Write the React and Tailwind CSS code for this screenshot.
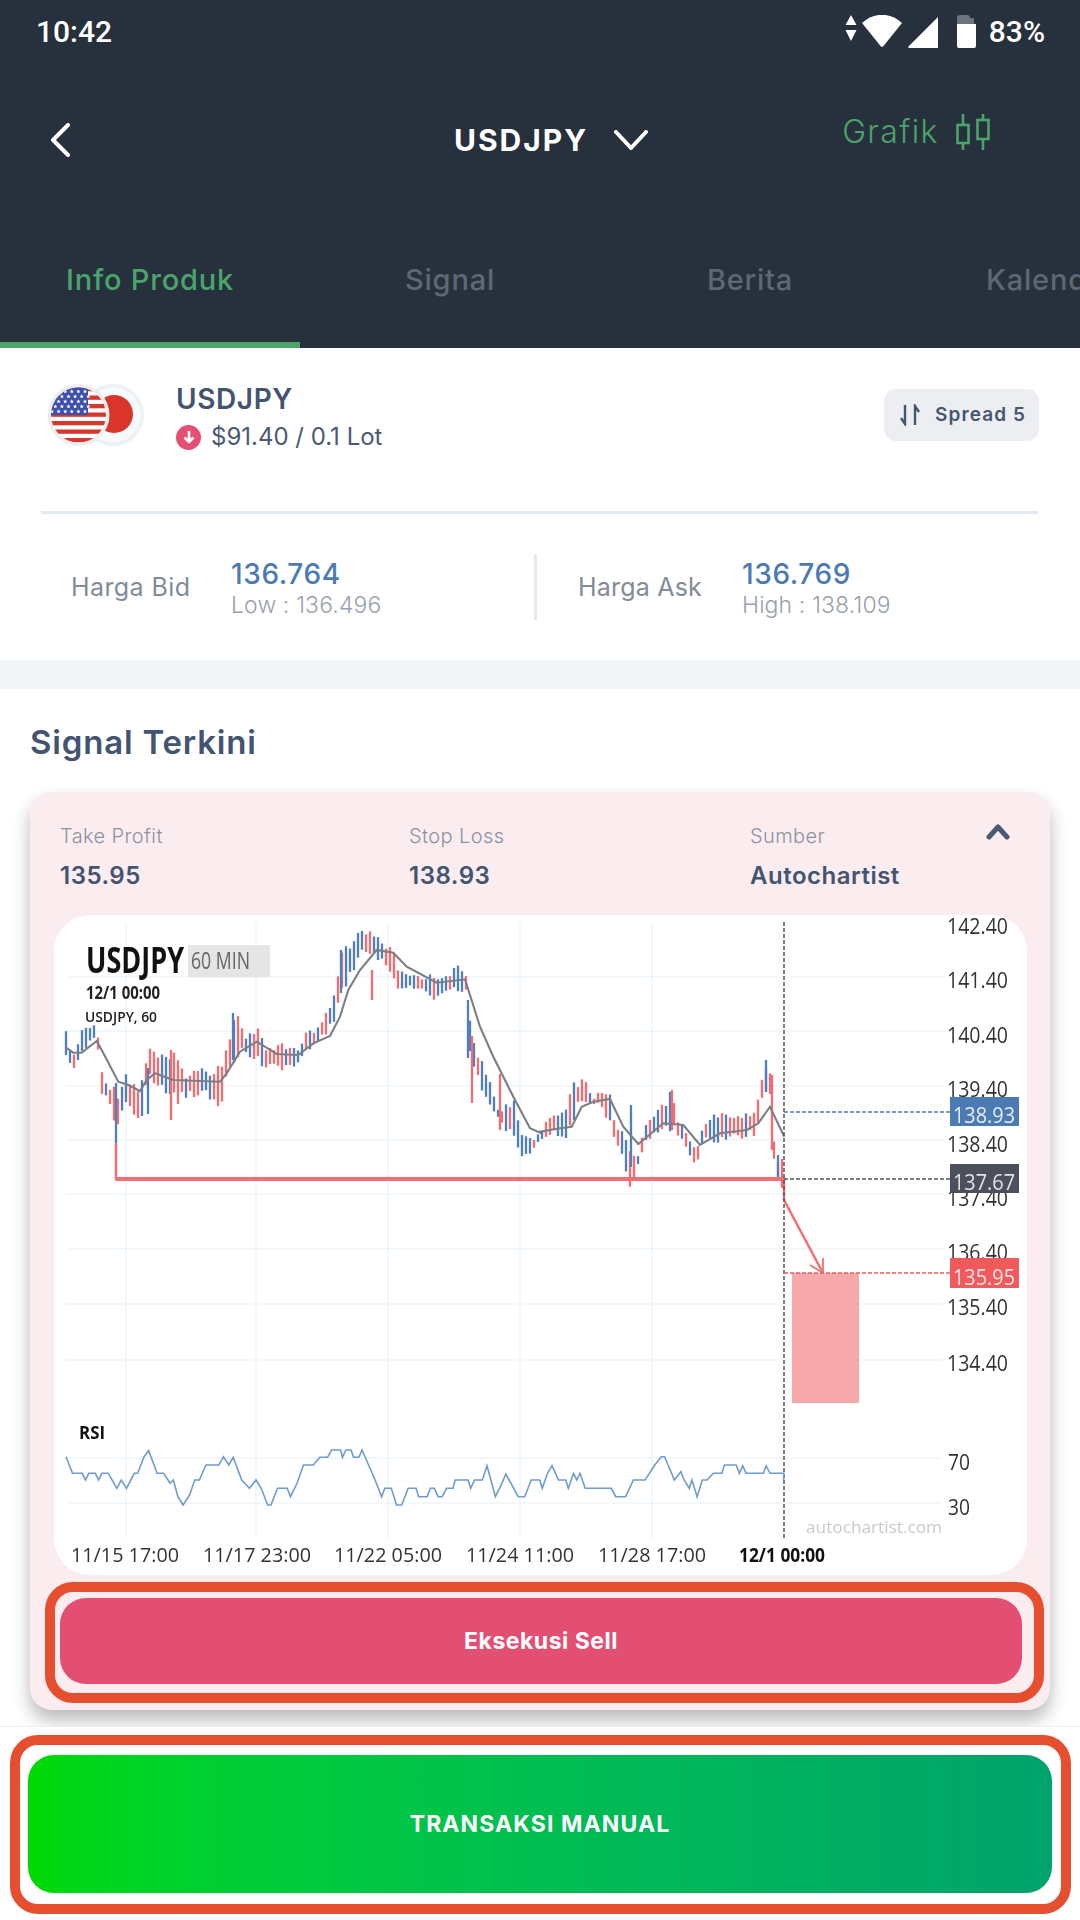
import { useId } from 'react';

// envelope of the candles, read off the chart at 3x (x/3 + offset)
const UP_A = [[77,360],[100,440],[128,345],[160,340],[172,360],[185,470],[215,530],[232,515],[258,478],[300,530],[325,400],[337,385],[355,430],[400,425],[440,480],[505,465],[550,435],[580,310],[600,310],[615,370],[655,350],[680,420],[720,385],[780,420],[795,365],[840,350],[890,230],[900,125],[920,90],[935,100],[960,58],[1010,62],[1020,100],[1055,98],[1075,180],[1110,190],[1190,190],[1255,165],[1275,178],[1285,230],[1297,370],[1310,440],[1330,435],[1345,490],[1375,595],[1420,560],[1440,660],[1480,680]];
const LOW_A = [[77,450],[100,485],[125,430],[170,390],[185,560],[212,600],[232,700],[258,590],[297,635],[310,615],[320,520],[355,545],[410,585],[480,555],[540,610],[560,500],[600,430],[680,485],[765,478],[830,400],[880,360],[900,250],[935,215],[960,130],[1030,160],[1075,240],[1120,240],[1190,280],[1240,255],[1280,250],[1290,445],[1330,565],[1370,620],[1390,655],[1440,745],[1470,740]];
const UP_B = [[0,665],[40,590],[60,625],[100,510],[135,497],[160,560],[205,522],[225,630],[270,690],[295,730],[320,620],[345,590],[395,540],[410,620],[440,650],[470,720],[495,620],[560,600],[620,610],[640,590],[660,520],[677,450],[695,500],[700,680],[715,735],[733,735]];
const LOW_B = [[0,690],[40,670],[70,690],[90,690],[110,600],[180,590],[230,700],[270,835],[285,830],[295,760],[320,700],[400,660],[440,730],[470,780],[490,700],[520,705],[600,690],[650,680],[665,590],[690,560],[695,715],[713,815],[733,870]];
const MA_A = [[77,412],[100,428],[125,428],[170,393],[185,420],[235,515],[265,525],[300,543],[320,510],[345,490],[400,510],[540,515],[560,490],[600,425],[650,395],[710,432],[775,435],[820,400],[870,378],[900,320],[925,240],[960,180],[1010,120],[1060,128],[1100,170],[1190,218],[1275,208],[1320,350],[1360,440],[1420,560],[1470,655],[1500,668]];
const MA_B = [[0,665],[60,655],[95,650],[125,590],[160,575],[210,567],[250,650],[295,702],[370,640],[430,645],[480,705],[540,670],[620,660],[655,640],[690,590],[733,680]];
const RSI = [[40,170],[50,220],[65,220],[70,240],[75,220],[85,220],[90,240],[95,220],[105,220],[118,265],[125,240],[133,265],[145,220],[150,220],[160,170],[167,152],[180,220],[190,220],[200,250],[205,240],[212,290],[220,315],[230,285],[238,240],[245,240],[255,195],[275,195],[282,170],[290,195],[297,172],[310,240],[322,265],[332,240],[340,265],[350,315],[355,315],[365,265],[380,265],[385,290],[395,250],[405,195],[420,195],[430,172],[442,172],[448,150],[462,150],[465,172],[470,150],[478,150],[482,172],[490,172],[495,150],[505,195],[515,240],[525,290],[530,265],[540,265],[548,315],[556,315],[566,265],[578,265],[582,290],[595,290],[600,265],[606,265],[612,290],[618,290],[625,265],[635,265],[638,240],[658,240],[662,265],[668,240],[680,240],[687,197],[700,290],[710,250],[716,222],[724,250],[735,290],[745,290],[755,240],[768,240],[772,265],[780,220],[787,197],[797,240],[808,240],[812,265],[820,220],[825,240],[830,220],[838,265],[878,265],[885,290],[900,290],[912,240],[930,240],[945,195],[955,170],[960,170],[975,240],[985,215],[990,240],[998,265],[1002,240],[1010,290],[1018,240],[1025,240],[1035,220],[1048,220],[1052,195],[1070,195],[1075,220],[1080,197],[1085,220],[1112,220],[1116,197],[1122,220],[1143,220],[1143,240]];
// spikes the envelope would lose: x, top, bottom on the page
const SPIKES = [
  [116, 1083, 1143, '#4f80bd'],
  [148, 1068, 1114, '#4f80bd'],
  [171, 1050, 1120, '#f26d70'],
  [233, 1013, 1060, '#4f80bd'],
  [341, 950, 993, '#4f80bd'],
  [372, 970, 1000, '#f26d70'],
  [468, 1000, 1058, '#4f80bd'],
  [472, 1036, 1103, '#f26d70'],
  [500, 1074, 1130, '#f26d70'],
  [672, 1090, 1130, '#f26d70'],
  [766, 1060, 1092, '#4f80bd'],
  [772, 1075, 1150, '#f26d70'],
  [778, 1155, 1181, '#4f80bd'],
  [631, 1105, 1167, '#4f80bd'],
];

const toPage = (pts, offX) => pts.map(([x, y]) => [offX + x / 3, 910 + y / 3]);
const upper = [...toPage(UP_A, 40), ...toPage(UP_B, 540)];
const lower = [...toPage(LOW_A, 40), ...toPage(LOW_B, 540)];
const maLine = [...toPage(MA_A, 40), ...toPage(MA_B, 540)];
const line = (pts) => pts.map(([x, y]) => `${x.toFixed(1)},${y.toFixed(1)}`).join(' ');

const at = (pts, x) => {
  for (let i = 1; i < pts.length; i++) {
    if (x <= pts[i][0]) {
      const [x0, y0] = pts[i - 1];
      const [x1, y1] = pts[i];
      return y0 + ((y1 - y0) * (x - x0)) / (x1 - x0 || 1);
    }
  }
  return pts[pts.length - 1][1];
};

const noise = (n) => {
  const v = Math.sin(n * 12.9898) * 43758.5453;
  return v - Math.floor(v);
};

const candles = [];
for (let x = 66, i = 0; x <= 784; x += 4, i++) {
  const top = at(upper, x);
  const bot = at(lower, x);
  const range = bot - top;
  candles.push({
    x,
    top: top + noise(i) * range * 0.3,
    bot: bot - noise(i + 500) * range * 0.3,
    color: noise(i + 900) > 0.5 ? '#f26d70' : '#4f80bd',
  });
}

const AXIS = [[142.4, 934], [141.4, 988], [140.4, 1043], [139.4, 1097], [138.4, 1152], [137.4, 1206], [136.4, 1260], [135.4, 1315], [134.4, 1371]];
const GRID_Y = [977, 1031, 1086, 1140, 1194, 1249, 1304, 1360];
const GRID_X = [126, 256, 388, 520, 652];
const TIMES = [['11/15 17:00', 71], ['11/17 23:00', 203], ['11/22 05:00', 334], ['11/24 11:00', 466], ['11/28 17:00', 598]];

function SignalChart() {
  return (
    <svg viewBox="54 915 973 660" className="block h-[660px] w-[973px] blur-[0.4px] font-['Open_Sans',sans-serif]">
      {GRID_Y.map((y) => (
        <line key={y} x1="66" x2="943" y1={y} y2={y} stroke="#eef5fa" strokeWidth="1.5" />
      ))}
      {[1458, 1503].map((y) => (
        <line key={y} x1="66" x2="941" y1={y} y2={y} stroke="#eef5fa" strokeWidth="1.5" />
      ))}
      {GRID_X.map((x) => (
        <line key={x} x1={x} x2={x} y1="923" y2="1538" stroke="#eef5fa" strokeWidth="1.5" />
      ))}

      {candles.map((c) => (
        <line key={c.x} x1={c.x} x2={c.x} y1={c.top} y2={c.bot} stroke={c.color} strokeWidth="2.3" />
      ))}
      {SPIKES.map(([x, t, b, color]) => (
        <line key={`${x}-${t}`} x1={x} x2={x} y1={t} y2={b} stroke={color} strokeWidth="2.3" />
      ))}
      <polyline points={line(maLine)} fill="none" stroke="#7b7f85" strokeWidth="2.1" />

      <polyline points="116,1143 116,1179 784,1179 784,1200 823,1273" fill="none" stroke="#f56f72" strokeWidth="2.5" />
      <line x1="116" x2="784" y1="1179" y2="1179" stroke="#f56f72" strokeWidth="4" />
      <polyline points="810,1265 823,1273 823,1258" fill="none" stroke="#f56f72" strokeWidth="1.8" />
      <rect x="792" y="1273" width="67" height="130" fill="#f6a8aa" />

      <line x1="784" x2="784" y1="922" y2="1538" stroke="#50555f" strokeWidth="1.5" strokeDasharray="4 2" />
      <line x1="784" x2="950" y1="1112" y2="1112" stroke="#4c7ab3" strokeWidth="1.5" strokeDasharray="4 2" />
      <line x1="784" x2="950" y1="1179" y2="1179" stroke="#50555f" strokeWidth="1.5" strokeDasharray="4 2" />
      <line x1="784" x2="950" y1="1273" y2="1273" stroke="#f05a5c" strokeWidth="1.5" strokeDasharray="4 2" />

      {AXIS.map(([v, y]) => (
        <text key={v} x="947" y={y} fontSize="21" fill="#333" textLength="61" lengthAdjust="spacingAndGlyphs">{v.toFixed(2)}</text>
      ))}
      <rect x="950" y="1097" width="69" height="29" fill="#4c7ab3" />
      <text x="953" y="1123" fontSize="21" fill="#e6edf5" textLength="62" lengthAdjust="spacingAndGlyphs">138.93</text>
      <rect x="950" y="1164" width="69" height="29" fill="#4b505c" />
      <text x="953" y="1190" fontSize="21" fill="#e2e3e6" textLength="62" lengthAdjust="spacingAndGlyphs">137.67</text>
      <rect x="950" y="1258" width="69" height="30" fill="#f05a5c" />
      <text x="953" y="1285" fontSize="21" fill="#fde5e5" textLength="62" lengthAdjust="spacingAndGlyphs">135.95</text>

      <text x="86" y="973" fontSize="36" fontWeight="700" fill="#111" textLength="98" lengthAdjust="spacingAndGlyphs">USDJPY</text>
      <rect x="188" y="945" width="82" height="32" fill="#e5e5e5" />
      <text x="191" y="969" fontSize="24" fill="#666" textLength="59" lengthAdjust="spacingAndGlyphs">60 MIN</text>
      <text x="86" y="999" fontSize="17" fontWeight="700" fill="#222" textLength="74" lengthAdjust="spacingAndGlyphs">12/1 00:00</text>
      <text x="85" y="1022" fontSize="15" fontWeight="600" fill="#222" textLength="72" lengthAdjust="spacingAndGlyphs">USDJPY, 60</text>

      <text x="79" y="1439" fontSize="17" fontWeight="700" fill="#111" textLength="26" lengthAdjust="spacingAndGlyphs">RSI</text>
      <polyline
        points={RSI.map(([x, y]) => `${(40 + x / 1.537).toFixed(1)},${(1400 + y / 3).toFixed(1)}`).join(' ')}
        fill="none"
        stroke="#6f9bd0"
        strokeWidth="1.6"
      />
      <text x="948" y="1470" fontSize="21" fill="#333" textLength="22" lengthAdjust="spacingAndGlyphs">70</text>
      <text x="948" y="1515" fontSize="21" fill="#333" textLength="22" lengthAdjust="spacingAndGlyphs">30</text>
      <text x="806" y="1533" fontSize="16" fill="#cacaca" textLength="136" lengthAdjust="spacingAndGlyphs">autochartist.com</text>

      {TIMES.map(([t, x]) => (
        <text key={t} x={x} y="1562" fontSize="20" fill="#333" textLength="108" lengthAdjust="spacingAndGlyphs">{t}</text>
      ))}
      <text x="739" y="1562" fontSize="20" fontWeight="700" fill="#111" textLength="86" lengthAdjust="spacingAndGlyphs">12/1 00:00</text>
    </svg>
  );
}

function Star({ x, y }) {
  const d = Array.from({ length: 10 }, (_, i) => {
    const r = i % 2 ? 1 : 2.3;
    const a = (i * Math.PI) / 5 - Math.PI / 2;
    return `${(x + r * Math.cos(a)).toFixed(2)},${(y + r * Math.sin(a)).toFixed(2)}`;
  }).join(' ');
  return <polygon points={d} fill="#fff" />;
}

function PairFlags() {
  const id = useId();
  const stripes = Array.from({ length: 7 }, (_, i) => 5 + i * 8.5);
  const stars = [];
  for (let r = 0; r < 5; r++) {
    for (let c = 0; c < 6; c++) {
      stars.push({ x: 8 + c * 6.6 + (r % 2 ? 3.3 : 0), y: 9.5 + r * 5 });
    }
  }
  return (
    <svg viewBox="0 0 104 66" className="h-[66px] w-[104px] shrink-0">
      <clipPath id={id}>
        <circle cx="34.5" cy="33" r="27.5" />
      </clipPath>
      <circle cx="69" cy="33" r="31" fill="#eef1f3" />
      <circle cx="69" cy="33" r="27.5" fill="#f6fafd" />
      <circle cx="70" cy="32" r="19" fill="#d9352b" />
      <circle cx="34.5" cy="33" r="31" fill="#eceef0" />
      <g clipPath={`url(#${id})`}>
        <rect x="0" y="0" width="70" height="66" fill="#fff" />
        {stripes.map((y) => (
          <rect key={y} x="0" y={y} width="70" height="4.3" fill="#d5392e" />
        ))}
        <rect x="0" y="0" width="44" height="33" fill="#3c4fad" />
        {stars.map((s) => (
          <Star key={`${s.x}-${s.y}`} x={s.x} y={s.y} />
        ))}
      </g>
    </svg>
  );
}

function StatusIcons() {
  return (
    <svg viewBox="0 0 135 36" className="h-[36px] w-[135px]">
      <path d="M6 0l5.5 10H.5zM.5 15h11L6 26z" fill="#fff" />
      <path d="M17 8C29-3 45-3 57 8L38.5 31a2 2 0 0 1-3 0z" fill="#fff" />
      <path d="M63 32L93 2v30.5a.5.5 0 0 1-.5.5H64z" fill="#fff" />
      <path d="M112 9V3a3 3 0 0 1 3-3h7v0a3 3 0 0 1 3 3h3a1 1 0 0 1 1 1v5z" fill="#6a737e" />
      <path d="M112 9h19v22a2 2 0 0 1-2 2h-15a2 2 0 0 1-2-2z" fill="#fff" />
    </svg>
  );
}

function Label({ children }) {
  return <span className="text-[20px] leading-[26px] font-light tracking-[0.4px] text-[#8b93a0]">{children}</span>;
}

function Value({ children }) {
  return <span className="mt-[13px] text-[24px] leading-[28px] font-semibold tracking-[0.5px] text-[#435470]">{children}</span>;
}

export default function App() {
  return (
    <div className="h-[1920px] w-[1080px] overflow-hidden bg-white font-['Inter',sans-serif]">
      <header className="h-[348px] bg-[#27303d]">
        <div className="flex h-[62px] items-center pl-[36px] font-['Roboto',sans-serif] text-[30px] font-medium text-white">
          <span>10:42</span>
          <div className="ml-auto flex items-center gap-[9px] pr-[35px]">
            <div className="mt-[3px]"><StatusIcons /></div>
            <span>83%</span>
          </div>
        </div>
        <div className="flex h-[156px] items-center">
          <svg viewBox="0 0 20 34" className="ml-[50px] h-[34px] w-[20px]" fill="none" stroke="#fff" strokeWidth="4" strokeLinecap="round" strokeLinejoin="round">
            <path d="M18 2L3 17l15 15" />
          </svg>
          <span className="ml-[384px] text-[30px] font-bold tracking-[2px] text-white">USDJPY</span>
          <svg viewBox="0 0 34 20" className="ml-[26px] h-[20px] w-[34px]" fill="none" stroke="#fff" strokeWidth="4" strokeLinecap="round" strokeLinejoin="round">
            <path d="M2 2l15 16L32 2" />
          </svg>
          <div className="ml-[194px] mt-[-16px] flex items-center gap-[17px] text-[#4aa56a]">
            <span className="text-[32px] font-light tracking-[1.4px]">Grafik</span>
            <svg viewBox="0 0 34 36" className="h-[36px] w-[34px]" fill="none" stroke="#4aa56a" strokeWidth="2.6">
              <path d="M7 0v11M7 29v7M27 0v6M27 25v11" />
              <rect x="1.5" y="11" width="11" height="18" />
              <rect x="21.5" y="6" width="11" height="19" />
            </svg>
          </div>
        </div>
        <div className="flex h-[124px] items-center overflow-hidden text-[29px] font-medium tracking-[0.8px]">
          <span className="w-[300px] shrink-0 text-center text-[#4aa56a]">Info Produk</span>
          <span className="w-[300px] shrink-0 text-center text-[#5f6773]">Signal</span>
          <span className="w-[300px] shrink-0 text-center text-[#5f6773]">Berita</span>
          <span className="w-[300px] shrink-0 pl-[86px] text-[#5f6773]">Kalender</span>
        </div>
        <div className="h-[6px] w-[300px] bg-[#4aa56a]" />
      </header>

      <section className="h-[312px]">
        <div className="flex h-[102px] items-center pl-[44px] pr-[41px] pt-[32px]">
          <PairFlags />
          <div className="ml-[28px] mt-[4px] flex flex-col">
            <span className="text-[28px] leading-[34px] font-semibold tracking-[0.6px] text-[#435470]">USDJPY</span>
            <div className="mt-[6px] flex items-center gap-[10px]">
              <span className="flex size-[25px] items-center justify-center rounded-full bg-[#e54f73]">
                <svg viewBox="0 0 14 14" className="size-[14px]" fill="none" stroke="#fff" strokeWidth="2.6" strokeLinejoin="round">
                  <path d="M7 1v10M2.5 7.5L7 12l4.5-4.5" />
                </svg>
              </span>
              <span className="text-[24px] leading-[30px] text-[#4a5a73]">$91.40 / 0.1 Lot</span>
            </div>
          </div>
          <div className="ml-auto flex h-[52px] w-[155px] items-center rounded-[12px] bg-[#eceef2] pl-[16px] text-[19px] font-semibold tracking-[1.1px] text-[#47566f]">
            <svg viewBox="0 0 20 22" className="h-[22px] w-[20px]" fill="none" stroke="#47566f" strokeWidth="2.4">
              <path d="M5 1v19L1 14M15 21V2l4 6" />
            </svg>
            <span className="ml-[15px]">Spread 5</span>
          </div>
        </div>
        <div className="ml-[41px] mt-[61px] h-[3px] w-[997px] bg-[#e2eaf0]" />
        <div className="flex h-[146px] items-center">
          <span className="ml-[71px] mt-[2px] w-[160px] text-[25px] tracking-[0.4px] text-[#838b98]">Harga Bid</span>
          <div className="mt-[4px] flex w-[303px] flex-col">
            <span className="text-[28px] leading-[32px] font-medium tracking-[0.6px] text-[#4a7ab5]">136.764</span>
            <span className="text-[23px] leading-[30px] font-light tracking-[0.1px] text-[#9aa2ad]">Low : 136.496</span>
          </div>
          <div className="h-[66px] w-[3px] bg-[#e2eaf0]" />
          <span className="ml-[41px] mt-[2px] w-[164px] text-[25px] tracking-[0.2px] text-[#838b98]">Harga Ask</span>
          <div className="mt-[4px] flex flex-col">
            <span className="text-[28px] leading-[32px] font-medium tracking-[0.6px] text-[#4a7ab5]">136.769</span>
            <span className="text-[23px] leading-[30px] font-light tracking-[0.1px] text-[#9aa2ad]">High : 138.109</span>
          </div>
        </div>
      </section>

      <div className="h-[29px] bg-[#f3f6f9]" />

      <section>
        <h2 className="pl-[30px] pt-[33px] text-[33px] leading-[40px] font-semibold tracking-[0.8px] text-[#435470]">Signal Terkini</h2>
        <div className="ml-[30px] mt-[30px] h-[918px] w-[1020px] rounded-[22px] bg-[#fbecef] shadow-[0_10px_18px_rgba(0,0,0,0.28)]">
          <div className="flex h-[123px] pl-[30px] pt-[31px]">
            <div className="flex w-[349px] flex-col"><Label>Take Profit</Label><Value>135.95</Value></div>
            <div className="flex w-[341px] flex-col"><Label>Stop Loss</Label><Value>138.93</Value></div>
            <div className="flex w-[236px] flex-col"><Label>Sumber</Label><Value>Autochartist</Value></div>
            <svg viewBox="0 0 24 16" className="mt-[1px] h-[16px] w-[24px]" fill="none" stroke="#4a5a73" strokeWidth="5" strokeLinecap="round" strokeLinejoin="round">
              <path d="M3 13l9-10 9 10" />
            </svg>
          </div>
          <div className="ml-[24px] h-[660px] w-[973px] overflow-hidden rounded-[36px] bg-white">
            <SignalChart />
          </div>
          <div className="ml-[15px] mt-[7px] h-[121px] w-[999px] rounded-[28px] border-[10px] border-[#e64e30] pb-[9px] pl-[5px] pr-[12px] pt-[6px]">
            <button className="flex h-[86px] w-full items-center justify-center rounded-[26px] bg-[#e34f73] text-[23px] font-bold tracking-[0.5px] text-white">
              Eksekusi Sell
            </button>
          </div>
        </div>
      </section>

      <div className="relative mt-[16px] h-[194px] border-t border-[#eeeeee] bg-white pt-[8px]">
        <div className="ml-[10px] h-[179px] w-[1061px] rounded-[28px] border-[10px] border-[#e64e30] pb-[11px] pl-[8px] pr-[9px] pt-[10px]">
          <button className="flex h-[138px] w-full items-center justify-center rounded-[26px] bg-linear-to-r from-[#00d900] to-[#00a36c] text-[23px] font-bold tracking-[1.1px] text-white">
            TRANSAKSI MANUAL
          </button>
        </div>
      </div>
    </div>
  );
}
